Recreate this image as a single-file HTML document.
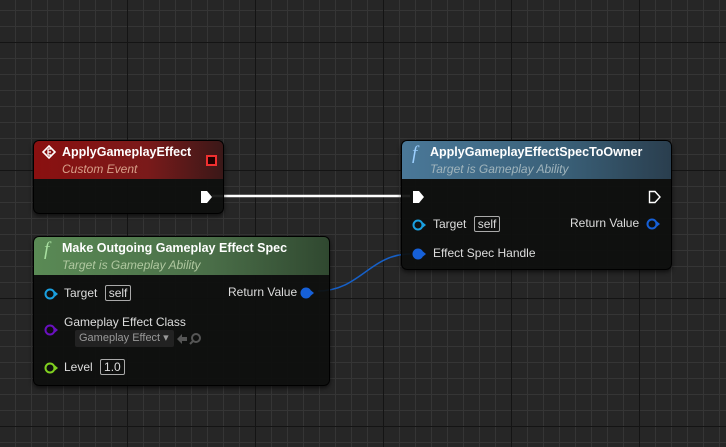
<!DOCTYPE html><html><head><style>
body{margin:0;width:726px;height:447px;overflow:hidden;font-family:"Liberation Sans",sans-serif;
background-color:#262626;
background-image:
linear-gradient(to right,#141414 0 1px,transparent 1px),
linear-gradient(to bottom,#141414 0 1px,transparent 1px),
linear-gradient(to right,#353535 0 1px,transparent 1px),
linear-gradient(to bottom,#353535 0 1px,transparent 1px);
background-size:128px 128px,128px 128px,16px 16px,16px 16px;
background-position:127px 0,0 42px,15px 0,0 10px;position:relative}
.n{position:absolute;background:rgba(14,15,14,.93);border-radius:6px;border:1px solid #000;box-shadow:0 2px 4px rgba(0,0,0,.6);color:#ddd;font-size:12px}
.h{border-radius:5px 5px 0 0;padding:3px 8px 0 28px;height:35px;position:relative;box-sizing:content-box}
.t{font-weight:bold;color:#fff;font-size:12.5px;line-height:16px}
.s{font-style:italic;font-size:12px;line-height:18px}
.a{position:absolute;white-space:nowrap}
.box{border:1px solid #aaa;border-radius:2px;padding:0 3px;margin-left:4px}
.f{position:absolute;left:10px;top:2px;font-family:"Liberation Serif",serif;font-style:italic;font-size:19px}
</style></head><body>
<svg style="position:absolute;left:0;top:0" width="726" height="447">
<line x1="212" y1="196" x2="410" y2="196" stroke="#fff" stroke-width="2.5"/>
<path d="M318 291 C360 291,370 254,410 254" stroke="#1660c8" stroke-width="1.5" fill="none"/>
</svg>

<div class="n" style="left:33px;top:140px;width:189px;height:72px">
<div class="h" style="background:linear-gradient(to right,#8a1010,#7a1a1a 60%,#3a1818)">
<svg class="a" style="left:8px;top:4px" width="14" height="14"><path d="M7 1L13 7L7 13L1 7Z" fill="none" stroke="#fff" stroke-width="1.6"/><path d="M6 4h3M6 7h3M6 10h3M6 4v6" stroke="#fff" stroke-width="1.3"/></svg>
<div class="t">ApplyGameplayEffect</div><div class="s" style="color:#d8a08a">Custom Event</div>
<div class="a" style="right:6px;top:14px;width:7px;height:7px;border:2px solid #f03030;background:#200"></div>
</div>
<svg class="a" style="left:166px;top:49px" width="14" height="14"><path d="M1 1H7L12 7L7 13H1Z" fill="#fff"/></svg>
</div>

<div class="n" style="left:33px;top:236px;width:295px;height:148px">
<div class="h" style="background:linear-gradient(to right,#5a8a55,#4a6e48 60%,#304830)">
<span class="f" style="color:#a8e0a0">f</span>
<div class="t">Make Outgoing Gameplay Effect Spec</div><div class="s" style="color:#b0c8a0">Target is Gameplay Ability</div>
</div>
<svg class="a" style="left:10px;top:51px" width="16" height="12"><circle cx="6" cy="6" r="4.5" fill="none" stroke="#1aa0e0" stroke-width="2"/><path d="M11 3.5L14 6L11 8.5Z" fill="#1aa0e0"/></svg>
<div class="a" style="left:30px;top:49px">Target <span class="box">self</span></div>
<div class="a" style="left:194px;top:48px">Return Value</div>
<svg class="a" style="left:266px;top:50px" width="16" height="12"><circle cx="6" cy="6" r="5.5" fill="#1660d8"/><path d="M11 3.5L14 6L11 8.5Z" fill="#1660d8"/></svg>
<svg class="a" style="left:10px;top:87px" width="16" height="12"><circle cx="6" cy="6" r="4.5" fill="none" stroke="#6a10c0" stroke-width="2"/><path d="M11 3.5L14 6L11 8.5Z" fill="#6a10c0"/></svg>
<div class="a" style="left:30px;top:78px">Gameplay Effect Class</div>
<div class="a" style="left:41px;top:93px;width:95px;height:17px;background:#222;border-radius:2px;color:#999;font-size:11px;line-height:17px;padding-left:4px">Gameplay Effect ▾</div>
<svg class="a" style="left:141px;top:95px" width="30" height="14"><path d="M2 7L7 2V5H12V9H7V12Z" fill="#555"/><circle cx="21" cy="6" r="4" fill="none" stroke="#555" stroke-width="2"/><path d="M18 9L15 12" stroke="#555" stroke-width="2"/></svg>
<svg class="a" style="left:10px;top:125px" width="16" height="12"><circle cx="6" cy="6" r="4.5" fill="none" stroke="#80d020" stroke-width="2"/><path d="M11 3.5L14 6L11 8.5Z" fill="#80d020"/></svg>
<div class="a" style="left:30px;top:123px">Level <span class="box">1.0</span></div>
</div>

<div class="n" style="left:401px;top:140px;width:269px;height:128px">
<div class="h" style="background:linear-gradient(to right,#4a7898,#3a6078 60%,#2a3e4e)">
<span class="f" style="color:#9cd0ff">f</span>
<div class="t">ApplyGameplayEffectSpecToOwner</div><div class="s" style="color:#a0b4bc">Target is Gameplay Ability</div>
</div>
<svg class="a" style="left:10px;top:49px" width="14" height="14"><path d="M1 1H7L12 7L7 13H1Z" fill="#fff"/></svg>
<svg class="a" style="left:246px;top:49px" width="14" height="14"><path d="M1.5 1.5H7L12 7L7 12.5H1.5Z" fill="none" stroke="#fff" stroke-width="1.4"/></svg>
<svg class="a" style="left:10px;top:78px" width="16" height="12"><circle cx="6" cy="6" r="4.5" fill="none" stroke="#1aa0e0" stroke-width="2"/><path d="M11 3.5L14 6L11 8.5Z" fill="#1aa0e0"/></svg>
<div class="a" style="left:31px;top:76px">Target <span class="box">self</span></div>
<div class="a" style="left:168px;top:75px">Return Value</div>
<svg class="a" style="left:244px;top:77px" width="16" height="12"><circle cx="6" cy="6" r="4.5" fill="none" stroke="#1660d8" stroke-width="2"/><path d="M11 3.5L14 6L11 8.5Z" fill="#1660d8"/></svg>
<svg class="a" style="left:10px;top:107px" width="16" height="12"><circle cx="6" cy="6" r="5.5" fill="#1660d8"/><path d="M11 3.5L14 6L11 8.5Z" fill="#1660d8"/></svg>
<div class="a" style="left:31px;top:105px">Effect Spec Handle</div>
</div>
</body></html>
